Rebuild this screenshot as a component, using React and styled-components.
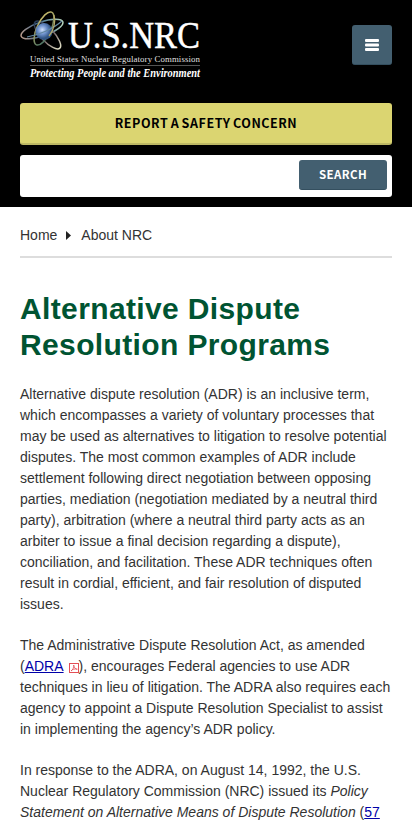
import React from "react";
import styled, { createGlobalStyle } from "styled-components";

const GlobalStyle = createGlobalStyle`
  *, *::before, *::after { box-sizing: border-box; }
  html { overflow: hidden; }
  body {
    margin: 0;
    background: #fff;
    color: #333;
    font: 14px/21px "Liberation Sans", Arial, sans-serif;
  }
`;

const Page = styled.div`
  height: 823px;
  overflow: hidden;
`;

const Header = styled.header`
  height: 207px;
  padding: 10px 20px;
  background: #000;
`;

const BrandRow = styled.div`
  display: flex;
  justify-content: space-between;
  height: 93px;
`;

const Logo = styled.svg`
  display: block;
  width: 184px;
  height: 76px;
`;

const MenuButton = styled.button`
  display: grid;
  place-items: center;
  width: 40px;
  height: 40px;
  margin-top: 15px;
  padding: 0;
  border: 0;
  border-bottom: 1px solid #344f5f;
  border-radius: 3px;
  background: #435f70;
`;

const MenuIcon = styled.svg`
  width: 14px;
  height: 12px;
  fill: #fff;
`;

const ReportButton = styled.button`
  display: block;
  width: 100%;
  height: 42px;
  padding: 0;
  border: 0;
  border-bottom: 2px solid #bdb864;
  border-radius: 3px;
  background: #dbd571;
  color: #000;
  font: 700 12.5px/20px "Noto Sans CJK SC", sans-serif;
  letter-spacing: 0.55px;
  word-spacing: -1px;
`;

const SearchForm = styled.form`
  display: flex;
  height: 42px;
  margin-top: 10px;
  padding: 5px;
  border-radius: 3px;
  background: #fff;
`;

const SearchInput = styled.input`
  flex: 1;
  min-width: 0;
  border: 0;
  outline: 0;
  background: transparent;
`;

const SearchButton = styled.button`
  width: 88px;
  height: 30px;
  padding: 0 0 2px;
  border: 0;
  border-bottom: 1px solid #344f5f;
  border-radius: 3px;
  background: #435f70;
  color: #fff;
  font: 700 11.5px/18px "Noto Sans CJK SC", sans-serif;
  letter-spacing: 0.4px;
`;

const Main = styled.main`
  padding: 0 20px;
`;

const Breadcrumb = styled.nav`
  display: flex;
  align-items: center;
  height: 51px;
  padding-top: 7px;
  border-bottom: 2px solid #ddd;
`;

const Chevron = styled.svg`
  width: 5px;
  height: 9px;
  margin: 0 10px 0 9px;
  fill: #222;
`;

const Title = styled.h1`
  margin: 33px 0 21px;
  color: #005432;
  font-size: 30px;
  line-height: 36px;
  letter-spacing: 0.37px;
`;

const Paragraph = styled.p`
  margin: 0 0 20px;
`;

const TextLink = styled.a`
  color: #0000a8;
  text-decoration: underline;
`;

const PdfIcon = styled.svg`
  width: 10px;
  height: 10px;
  margin-left: 5px;
  vertical-align: -2px;
  fill: none;
  stroke: #e34f56;
`;

function NrcLogo() {
  return (
    <Logo viewBox="0 0 184 76" role="img" aria-label="U.S.NRC">
      <defs>
        <radialGradient id="globe" cx="40%" cy="40%">
          <stop offset="0" stopColor="#d0e0fa" />
          <stop offset=".5" stopColor="#7295cf" />
          <stop offset="1" stopColor="#315483" />
        </radialGradient>
        <linearGradient id="orbitA">
          <stop stopColor="#b89a8b" />
          <stop offset=".45" stopColor="#38648b" />
          <stop offset="1" stopColor="#b8d8bf" />
        </linearGradient>
        <linearGradient id="orbitB">
          <stop stopColor="#273a55" />
          <stop offset=".6" stopColor="#806f70" />
          <stop offset="1" stopColor="#e0dfc6" />
        </linearGradient>
        <linearGradient id="orbitC" y2="1">
          <stop stopColor="#d6c36d" />
          <stop offset=".5" stopColor="#8e9662" />
          <stop offset="1" stopColor="#396966" />
        </linearGradient>
      </defs>
      <g fill="none" strokeWidth="1.5">
        <ellipse cx="22" cy="19" rx="22" ry="7" stroke="url(#orbitA)" transform="rotate(-19 22 19)" />
        <ellipse cx="27.5" cy="25" rx="18" ry="6.5" stroke="url(#orbitB)" transform="rotate(47 27.5 25)" />
        <ellipse cx="24" cy="18.5" rx="7" ry="18" stroke="url(#orbitC)" transform="rotate(25 24 18.5)" />
      </g>
      <circle cx="24" cy="21.5" r="8.5" fill="url(#globe)" />
      <path d="M7 27C19 25 33 19 42 11" fill="none" stroke="#6287a0" strokeWidth="1.2" />
      <path d="M34 5C36 11 34 20 29 26" fill="none" stroke="#b7aa67" strokeWidth="1.2" />
      <g fill="#fff" fontFamily="Liberation Serif, serif">
        <text x="48" y="37.5" fontSize="38" stroke="#fff" strokeWidth=".45" textLength="132" lengthAdjust="spacingAndGlyphs">U.S.NRC</text>
        <text x="10" y="51.5" fontSize="8.8" fillOpacity=".9" textLength="170" lengthAdjust="spacing">United States Nuclear Regulatory Commission</text>
        <text x="10" y="67" fontSize="11.5" fontWeight="700" fontStyle="italic" textLength="170" lengthAdjust="spacingAndGlyphs">Protecting People and the Environment</text>
      </g>
      <path d="M10 55.5H180" stroke="#777" strokeWidth=".7" />
    </Logo>
  );
}

export default function App() {
  return (
    <Page>
      <GlobalStyle />
      <Header>
        <BrandRow>
          <NrcLogo />
          <MenuButton aria-label="Menu">
            <MenuIcon viewBox="0 0 14 12">
              <rect width="14" height="3" rx="1" />
              <rect y="4.5" width="14" height="3" rx="1" />
              <rect y="9" width="14" height="3" rx="1" />
            </MenuIcon>
          </MenuButton>
        </BrandRow>
        <ReportButton>REPORT A SAFETY CONCERN</ReportButton>
        <SearchForm onSubmit={(event) => event.preventDefault()}>
          <SearchInput aria-label="Search" />
          <SearchButton>SEARCH</SearchButton>
        </SearchForm>
      </Header>
      <Main>
        <Breadcrumb>
          <span>Home</span>
          <Chevron viewBox="0 0 5 9"><path d="M0 0L5 4.5L0 9Z" /></Chevron>
          <span>About NRC</span>
        </Breadcrumb>
        <Title>Alternative Dispute<br />Resolution Programs</Title>
        <Paragraph>
          Alternative dispute resolution (ADR) is an inclusive term, which encompasses a variety of
          voluntary processes that may be used as alternatives to litigation to resolve potential
          disputes. The most common examples of ADR include settlement following direct negotiation
          between opposing parties, mediation (negotiation mediated by a neutral third party),
          arbitration (where a neutral third party acts as an arbiter to issue a final decision
          regarding a dispute), conciliation, and facilitation. These ADR techniques often result in
          cordial, efficient, and fair resolution of disputed issues.
        </Paragraph>
        <Paragraph>
          The Administrative Dispute Resolution Act, as amended (<TextLink href="#adra">ADRA</TextLink>
          <PdfIcon viewBox="0 0 10 10" aria-label="PDF">
            <rect x=".5" y=".5" width="9" height="9" />
            <path d="M2 8C4 7 5 4 4.7 2C5 5 7 6.5 8.3 6.2C6 5.6 3.5 6 2 8Z" strokeWidth=".8" />
          </PdfIcon>
          ), encourages Federal agencies to use ADR techniques in lieu of litigation. The ADRA also
          requires each agency to appoint a Dispute Resolution Specialist to assist in implementing
          the agency’s ADR policy.
        </Paragraph>
        <Paragraph>
          In response to the ADRA, on August 14, 1992, the U.S. Nuclear Regulatory Commission (NRC)
          issued its <em>Policy Statement on Alternative Means of Dispute Resolution</em> (<TextLink href="#fr">57</TextLink>
        </Paragraph>
      </Main>
    </Page>
  );
}
